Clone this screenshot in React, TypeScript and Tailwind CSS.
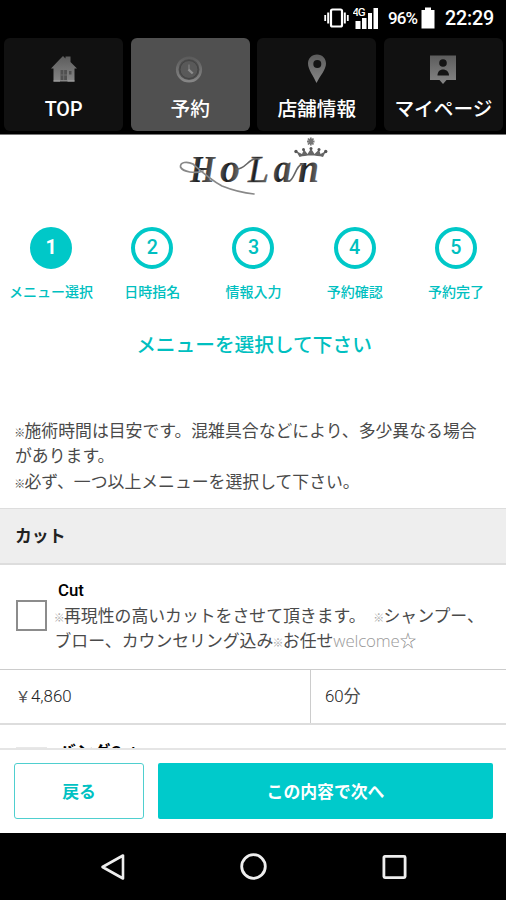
import React from 'react';

const TABS = [
  { label: 'TOP', icon: HomeIcon, active: false },
  { label: '予約', icon: ClockIcon, active: true },
  { label: '店舗情報', icon: PinIcon, active: false },
  { label: 'マイページ', icon: MyPageIcon, active: false },
];

const STEPS = ['メニュー選択', '日時指名', '情報入力', '予約確認', '予約完了'];

function IconGradient({ id }: { id: string }) {
  return (
    <defs>
      <linearGradient id={id} x1="0" y1="0" x2="0" y2="1">
        <stop offset="0" stopColor="#5c5c5c" />
        <stop offset="1" stopColor="#868686" />
      </linearGradient>
    </defs>
  );
}

function HomeIcon() {
  return (
    <svg width="30" height="30" viewBox="0 0 30 30" aria-hidden>
      <IconGradient id="home" />
      <path
        d="M2 14.5 L11 5 L14 2 L16.500 4.500 V2.500 H21.5 V8 L28 14.5 H25.5 V27.5 H4.5 V14.5 Z"
        fill="url(#home)"
      />
      <path d="M11.500 16h6.500v10h-6.500zM20 17h2.500v3.500h-2.500z" fill="#505050" />
      <path d="M14.700 16v10M11.500 21h6.500" stroke="#6d6d6d" strokeWidth="1" />
      <path d="M4.500 27h6.500M18.500 27h7" stroke="#a8a8a8" strokeWidth="1.200" />
    </svg>
  );
}

function ClockIcon() {
  return (
    <svg width="30" height="30" viewBox="0 0 30 30" aria-hidden>
      <IconGradient id="clock" />
      <circle cx="14" cy="15.500" r="11.800" fill="#4d4d4d" stroke="url(#clock)" strokeWidth="2.600" />
      <circle cx="14" cy="15.500" r="9" fill="#595959" stroke="#434343" />
      <path d="M14 10.500v5.500" stroke="#777" strokeWidth="1.600" />
      <path d="M13.500 15.500l4.200 4" stroke="#8d8d8d" strokeWidth="2.400" />
    </svg>
  );
}

function PinIcon() {
  return (
    <svg width="30" height="30" viewBox="0 0 30 30" aria-hidden>
      <IconGradient id="pin" />
      <path
        d="M15 0.500 C9.500 0.500 6 4.500 6 9.500 C6 15.500 11.500 22 14.500 29 C18 22 24 15.500 24 9.500 C24 4.500 20.500 0.500 15 0.500 Z"
        fill="url(#pin)"
      />
      <circle cx="15.300" cy="10" r="4" fill="#141414" />
    </svg>
  );
}

function MyPageIcon() {
  return (
    <svg width="30" height="32" viewBox="0 0 30 32" aria-hidden>
      <IconGradient id="mypage" />
      <path d="M2 2.500 H28 V27 H18.500 L15 31 L11.500 27 H2 Z" fill="url(#mypage)" />
      <circle cx="15" cy="10" r="3.800" fill="#141414" />
      <path d="M9.500 22.500 C9.500 18.500 12 16.500 15 16.500 C18 16.500 21 18.500 21 22.500 Z" fill="#141414" />
    </svg>
  );
}

function StatusBar() {
  return (
    <div className="flex h-9 shrink-0 items-center justify-end pr-3 font-['Roboto'] text-white">
      <svg width="25" height="20" viewBox="0 0 25 20" className="mr-1" aria-hidden>
        <rect x="7" y="1.500" width="11" height="17" rx="1.500" fill="none" stroke="#fff" strokeWidth="2.200" />
        <path d="M4.200 4.500v11M20.800 4.500v11" stroke="#fff" strokeWidth="2" />
        <path d="M1.200 7v6M23.800 7v6" stroke="#fff" strokeWidth="1.800" />
      </svg>
      <svg width="27" height="25" viewBox="0 0 27 25" className="mr-2 mb-0.5" aria-hidden>
        <path d="M2.500 16h5v8h-5zM9 13h4.500v11h-4.500zM15 8h4v16h-4zM20.500 3h4.500v21h-4.500z" fill="#fff" />
        <text
          x="-0.500"
          y="11"
          fontFamily="Roboto"
          fontWeight="500"
          fontSize="11.500"
          textLength="13"
          fill="#fff"
          stroke="#000"
          strokeWidth="1.500"
          paintOrder="stroke"
        >
          4G
        </text>
      </svg>
      <span className="w-[31px] text-[17px] font-medium leading-none tracking-[-0.900px]">96%</span>
      <svg width="14" height="22" viewBox="0 0 14 22" className="ml-[2px] mr-[10px]" aria-hidden>
        <path d="M4 0.500h6V3h3.500v18.500H0.500V3H4z" fill="#fff" />
      </svg>
      <span className="pt-0.5 text-[19.700px] font-medium leading-none tracking-[-0.200px]">22:29</span>
    </div>
  );
}

function TabBar() {
  return (
    <nav className="grid h-[99px] shrink-0 grid-cols-4 gap-[7.500px] border-b border-[#777] pb-[3px] pl-1 pr-[3px] pt-0.5">
      {TABS.map(({ label, icon: Icon, active }) => (
        <button
          key={label}
          type="button"
          className={`flex flex-col items-center rounded-md pt-[15px] text-white ${
            active ? 'bg-[#505050]' : 'bg-[#111]'
          }`}
        >
          <span className="flex h-8 items-center">
            <Icon />
          </span>
          <span className="mt-[9.500px] whitespace-nowrap font-['Roboto','Noto_Sans_CJK_JP',sans-serif] text-[19.700px] font-medium leading-[30px]">
            {label}
          </span>
        </button>
      ))}
    </nav>
  );
}

function Logo() {
  return (
    <svg width="160" height="66" viewBox="175 135 160 66" role="img" aria-label="HoLan">
      <defs>
        <linearGradient id="ink" x1="0" y1="0" x2="1" y2="0.300">
          <stop offset="0" stopColor="#777" />
          <stop offset="0.500" stopColor="#1c1c1c" />
          <stop offset="1" stopColor="#666" />
        </linearGradient>
      </defs>
      <g fontFamily="Liberation Serif" fontStyle="italic" fill="url(#ink)">
        <text x="190" y="182" fontSize="37" fontWeight="700" textLength="25" lengthAdjust="spacingAndGlyphs">H</text>
        <text x="220" y="182" fontSize="41" fontWeight="700" textLength="20" lengthAdjust="spacingAndGlyphs">o</text>
        <text x="248" y="182" fontSize="37" textLength="21" lengthAdjust="spacingAndGlyphs" stroke="#555" strokeWidth="0.500">L</text>
        <text x="273.500" y="182" fontSize="39" fontWeight="700" textLength="18" lengthAdjust="spacingAndGlyphs">a</text>
        <text x="298" y="182" fontSize="42" fontWeight="700" textLength="21" lengthAdjust="spacingAndGlyphs">n</text>
      </g>
      <g fill="none" stroke="#888" strokeLinecap="round">
        <path
          d="M203 171 C195 174 183 172 180.500 167 C180 162 187 161 193 164 C201 171 211 180 222 186 C232 190 244 193 254 194"
          strokeWidth="1.700"
        />
        <path
          d="M236 169 C246 170 248 157 259 159 M289 181 C294 181 296 164 303 164"
          stroke="#666"
          strokeWidth="1.600"
        />
      </g>
      <path
        d="M299.500 157 L296 151 L302 154 L304 149.500 L307.500 154 L311 148.500 L314.500 154 L319 149.500 L320.500 154 L326 151 L323 157 C316 155 306 155 299.500 157 Z"
        fill="#666"
      />
      <g fill="#555">
        <circle cx="296" cy="151.500" r="1.700" />
        <circle cx="303.500" cy="149.500" r="1.500" />
        <circle cx="311" cy="148.500" r="1.500" />
        <circle cx="319" cy="149.500" r="1.500" />
        <circle cx="325.700" cy="151.500" r="1.700" />
      </g>
      <path
        d="M308 138.500l5.500 6M313.500 138.500l-5.500 6M310.800 137.500v8M307 141.500h7.500"
        stroke="#777"
        strokeWidth="1.800"
      />
    </svg>
  );
}

function StepBar() {
  return (
    <ol className="grid grid-cols-5 text-[#00bfc0]">
      {STEPS.map((label, i) => (
        <li key={label} className="flex flex-col items-center pl-px">
          <span
            className={`flex size-[42px] items-center justify-center rounded-full border-4 border-[#00c8c8] font-['Roboto'] text-[19.700px] leading-none ${
              i === 0 ? 'bg-[#00c8c8] font-bold text-white' : 'font-medium'
            }`}
          >
            {i + 1}
          </span>
          <span className="mt-3 whitespace-nowrap text-[14px] font-medium leading-5">{label}</span>
        </li>
      ))}
    </ol>
  );
}

/** Narrow reference mark, half the width of the kana around it. */
function Mark({ light = false }: { light?: boolean }) {
  return (
    <span
      className={`inline-flex h-[17px] w-[9.500px] items-center justify-center overflow-visible align-middle text-[11px] leading-none ${
        light ? 'text-[#aaa]' : ''
      }`}
    >
      ※
    </span>
  );
}

function MenuItem() {
  return (
    <div className="flex h-[105px] border-b border-[#ccc] pl-4 pt-3">
      <span className="mt-[23px] size-[31px] shrink-0 border-2 border-[#8c8c8c] bg-white" />
      <div className="ml-[7.500px]">
        <p className="pl-[3.500px] pt-px font-['Roboto'] text-[16.850px] font-medium leading-[24px] text-black">Cut</p>
        <p className="whitespace-nowrap text-[16.850px] leading-[25.300px]">
          <Mark light />
          再現性の高いカットをさせて頂きます。{'\u3000'}
          <Mark light />
          シャンプー、
          <br />
          ブロー、カウンセリング込み
          <Mark light />
          お任せ<span className="font-['Open_Sans'] font-light tracking-[-0.150px] text-[#999]">welcome</span>
          <span className="text-[#888]">☆</span>
        </p>
      </div>
    </div>
  );
}

export default function App() {
  return (
    <div className="flex h-[900px] w-[506px] flex-col overflow-hidden bg-black font-['Noto_Sans_CJK_JP',sans-serif] text-[#4a4a4a]">
      <StatusBar />
      <TabBar />

      <main className="h-[613px] shrink-0 overflow-hidden bg-white">
        <div className="flex h-[92px] justify-center pl-1">
          <Logo />
        </div>
        <StepBar />
        <h1 className="mt-[27px] pl-0.5 text-center text-[19.700px] font-medium leading-8 text-[#00bfc0]">
          メニューを選択して下さい
        </h1>

        <p className="mt-[57px] whitespace-nowrap pl-[15px] text-[16.850px] leading-[25.300px]">
          <Mark />
          施術時間は目安です。混雑具合などにより、多少異なる場合
          <br />
          があります。
          <br />
          <Mark />
          必ず、一つ以上メニューを選択して下さい。
        </p>

        <h2 className="mt-[15px] h-[57px] border-b-2 border-t border-[#ddd] bg-[#eee] pl-[15px] text-[16.850px] font-bold leading-[51px] text-[#222]">
          カット
        </h2>
        <MenuItem />
        <div className="flex h-[55px] border-b-2 border-[#ddd] text-[16.850px] leading-[50px]">
          <span className="w-[311px] border-r border-[#ccc] pl-[15px]">
            <span className="inline-block w-4 text-center text-[15px]">￥</span>
            <span className="font-['Roboto'] font-light text-[#222]">4,860</span>
          </span>
          <span className="pl-[14px]">
            <span className="font-['Roboto'] font-light text-[#222]">60</span>分
          </span>
        </div>
        <div className="flex pl-4 pt-[13px]">
          <span className="mt-[9px] h-[31px] w-[31px] border-2 border-[#e8e8e8]" />
          <p className="ml-3 text-[16.850px] font-bold leading-[25px] text-black">
            バング<span className="font-['Roboto'] font-medium">Cut</span>
          </p>
        </div>
      </main>

      <footer className="flex h-[85px] shrink-0 gap-[14px] border-t-2 border-[#e5e5e5] bg-white pl-[14px] pr-[13px] pt-[13px] text-[16.850px] font-bold">
        <button
          type="button"
          className="h-[56px] w-[130px] rounded-[3px] border border-[#4fcfcf] text-[#00c1c2]"
        >
          戻る
        </button>
        <button type="button" className="h-[56px] flex-1 rounded-[2px] bg-[#00cacb] text-white">
          この内容で次へ
        </button>
      </footer>

      <div className="flex h-[67px] items-center justify-center gap-[114px]">
        <svg width="28" height="30" viewBox="0 0 28 30" fill="none" stroke="#eee" strokeWidth="2.600" aria-hidden>
          <path d="M4.500 15 L25 3.500 V26.500 Z" strokeLinejoin="round" />
        </svg>
        <svg width="28" height="28" viewBox="0 0 28 28" fill="none" stroke="#eee" strokeWidth="2.800" aria-hidden>
          <circle cx="13.500" cy="13.500" r="11.800" />
        </svg>
        <svg width="26" height="26" viewBox="0 0 26 26" fill="none" stroke="#eee" strokeWidth="2.800" aria-hidden>
          <rect x="1.900" y="2.400" width="21.200" height="21.200" rx="1" />
        </svg>
      </div>
    </div>
  );
}
